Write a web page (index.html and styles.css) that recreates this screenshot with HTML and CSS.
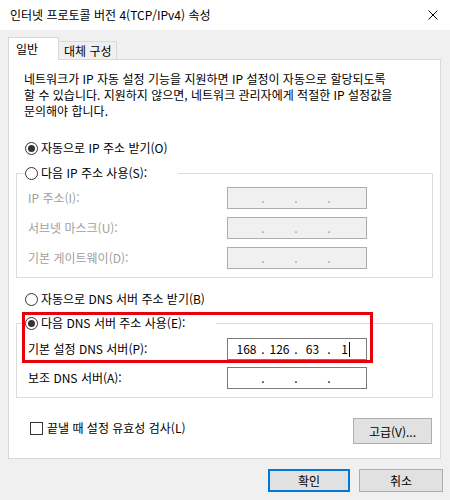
FILE: index.html
```html
<!DOCTYPE html>
<html lang="ko">
<head>
  <meta charset="UTF-8">
  <meta name="viewport" content="width=device-width, initial-scale=1.0">
  <title>인터넷 프로토콜 버전 4(TCP/IPv4) 속성</title>
  <link rel="stylesheet" href="styles.css">
</head>
<body>
  <div class="titlebar">
    <span class="title">인터넷 프로토콜 버전 4(TCP/IPv4) 속성</span>
    <svg class="close" width="10" height="10" viewBox="0 0 10 10">
      <path d="M0.5 0.5L9.5 9.5M9.5 0.5L0.5 9.5" stroke="#000" stroke-width="1" fill="none"/>
    </svg>
  </div>

  <div class="dialog">
    <div class="tabs">
      <div class="tab active">일반</div>
      <div class="tab">대체 구성</div>
    </div>

    <div class="panel">
      <p class="intro">네트워크가 IP 자동 설정 기능을 지원하면 IP 설정이 자동으로 할당되도록<br>할 수 있습니다. 지원하지 않으면, 네트워크 관리자에게 적절한 IP 설정값을<br>문의해야 합니다.</p>

      <div class="radio-row ip-auto"><span class="radio checked"></span>자동으로 IP 주소 받기(O)</div>

      <fieldset class="group ip-group">
        <legend><span class="radio-row"><span class="radio"></span>다음 IP 주소 사용(S):</span></legend>
        <div class="field-row disabled">
          <span class="field-label">IP 주소(I):</span>
          <div class="ip-field"><span class="octet"></span><span class="dot">.</span><span class="octet"></span><span class="dot">.</span><span class="octet"></span><span class="dot">.</span><span class="octet"></span></div>
        </div>
        <div class="field-row disabled">
          <span class="field-label">서브넷 마스크(U):</span>
          <div class="ip-field"><span class="octet"></span><span class="dot">.</span><span class="octet"></span><span class="dot">.</span><span class="octet"></span><span class="dot">.</span><span class="octet"></span></div>
        </div>
        <div class="field-row disabled">
          <span class="field-label">기본 게이트웨이(D):</span>
          <div class="ip-field"><span class="octet"></span><span class="dot">.</span><span class="octet"></span><span class="dot">.</span><span class="octet"></span><span class="dot">.</span><span class="octet"></span></div>
        </div>
      </fieldset>

      <div class="radio-row dns-auto"><span class="radio"></span>자동으로 DNS 서버 주소 받기(B)</div>

      <fieldset class="group dns-group">
        <legend><span class="radio-row"><span class="radio checked"></span>다음 DNS 서버 주소 사용(E):</span></legend>
        <div class="field-row">
          <span class="field-label">기본 설정 DNS 서버(P):</span>
          <div class="ip-field"><span class="octet">168</span><span class="dot">.</span><span class="octet">126</span><span class="dot">.</span><span class="octet">63</span><span class="dot">.</span><span class="octet">1<span class="caret"></span></span></div>
        </div>
        <div class="field-row">
          <span class="field-label">보조 DNS 서버(A):</span>
          <div class="ip-field"><span class="octet"></span><span class="dot">.</span><span class="octet"></span><span class="dot">.</span><span class="octet"></span><span class="dot">.</span><span class="octet"></span></div>
        </div>
      </fieldset>

      <div class="options">
        <div class="check-row"><span class="checkbox"></span>끝낼 때 설정 유효성 검사(L)</div>
        <button class="btn advanced">고급(V)...</button>
      </div>

      <div class="highlight"></div>
    </div>

    <div class="buttons">
      <button class="btn ok">확인</button>
      <button class="btn cancel">취소</button>
    </div>
  </div>
</body>
</html>
```

FILE: styles.css
```css
body {
  margin: 0;
  background-color: #f0f0f0;
  font-family: "Noto Sans CJK KR", "Noto Sans", sans-serif;
  font-size: 12px;
  line-height: 16px;
  color: #000;
}

.titlebar {
  height: 30px;
  background-color: #fff;
  display: flex;
  align-items: center;
  justify-content: space-between;
  padding: 0 12px 0 10px;
}

.close {
  display: block;
}

.dialog {
  padding: 7px 0 0 8px;
}

/* tabs */
.tabs {
  display: flex;
  align-items: flex-end;
  height: 22px;
}

.tab {
  box-sizing: border-box;
  height: 18px;
  width: 58px;
  padding-left: 5px;
  background-color: #f0f0f0;
  border: 1px solid #d9d9d9;
  border-left: none;
  border-bottom: none;
  line-height: 17px;
}

.tab.active {
  position: relative;
  z-index: 1;
  height: 23px;
  width: 51px;
  margin-bottom: -1px;
  padding-left: 7px;
  background-color: #fff;
  border-left: 1px solid #d9d9d9;
  line-height: 21px;
}

.panel {
  position: relative;
  width: 433px;
  box-sizing: border-box;
  background-color: #fff;
  border: 1px solid #d9d9d9;
  padding: 11px 7px 14px 7px;
}

.intro {
  margin: 0 0 0 8px;
}

/* radios */
.radio-row {
  display: flex;
  align-items: center;
  height: 16px;
  gap: 3px;
}

.ip-auto {
  margin: 21px 0 0 9px;
}

.dns-auto {
  margin: 13px 0 0 9px;
}

.radio {
  width: 13px;
  height: 13px;
  box-sizing: border-box;
  border: 1px solid #333;
  border-radius: 50%;
  background-color: #fff;
  display: flex;
  align-items: center;
  justify-content: center;
}

.radio.checked::after {
  content: "";
  width: 7px;
  height: 7px;
  border-radius: 50%;
  background-color: #333;
}

/* group boxes */
.group {
  margin: 0;
  border: 1px solid #dcdcdc;
  padding: 6px 0 8px 10px;
}

.group legend {
  padding: 0 31px 0 0;
  margin-left: -2px;
}

.ip-group {
  margin-top: 9px;
}

.dns-group {
  margin-top: 8px;
  padding-top: 7px;
}

.field-row {
  display: grid;
  grid-template-columns: 199px 140px;
  align-items: center;
  padding-left: 1px;
}

.field-row + .field-row {
  margin-top: 8px;
}

.dns-group .field-row + .field-row {
  margin-top: 7px;
}

.ip-field {
  box-sizing: border-box;
  height: 22px;
  border: 1px solid #7a7a7a;
  background-color: #fff;
  display: flex;
  align-items: center;
  padding-left: 6px;
}

.octet {
  width: 25px;
  text-align: center;
}

.dot {
  width: 8px;
  text-align: center;
}

.caret {
  display: inline-block;
  width: 1px;
  height: 15px;
  margin-left: 1px;
  background-color: #000;
  vertical-align: -3px;
}

.field-row.disabled {
  color: #a0a0a0;
}

.field-row.disabled .ip-field {
  background-color: #f0f0f0;
  border-color: #adadad;
}

/* validate + advanced */
.options {
  display: flex;
  justify-content: space-between;
  align-items: flex-start;
  margin-top: 20px;
}

.check-row {
  display: flex;
  align-items: center;
  gap: 4px;
  margin: 2px 0 0 14px;
}

.checkbox {
  width: 13px;
  height: 13px;
  box-sizing: border-box;
  border: 1px solid #333;
  background-color: #fff;
}

.btn {
  box-sizing: border-box;
  background-color: #e1e1e1;
  border: 1px solid #adadad;
  font-family: inherit;
  font-size: 12px;
  color: #000;
  padding: 0;
}

.advanced {
  width: 79px;
  height: 26px;
  margin-right: 1px;
}

.highlight {
  position: absolute;
  left: 13px;
  top: 252px;
  width: 351px;
  height: 51px;
  box-sizing: border-box;
  border: 3px solid #e8000b;
}

/* dialog buttons */
.buttons {
  display: flex;
  justify-content: flex-end;
  gap: 9px;
  margin-top: 10px;
  padding-right: 7px;
}

.buttons .btn {
  height: 23px;
}

.ok {
  width: 82px;
  border: 2px solid #0078d7;
}

.cancel {
  width: 84px;
}
```
